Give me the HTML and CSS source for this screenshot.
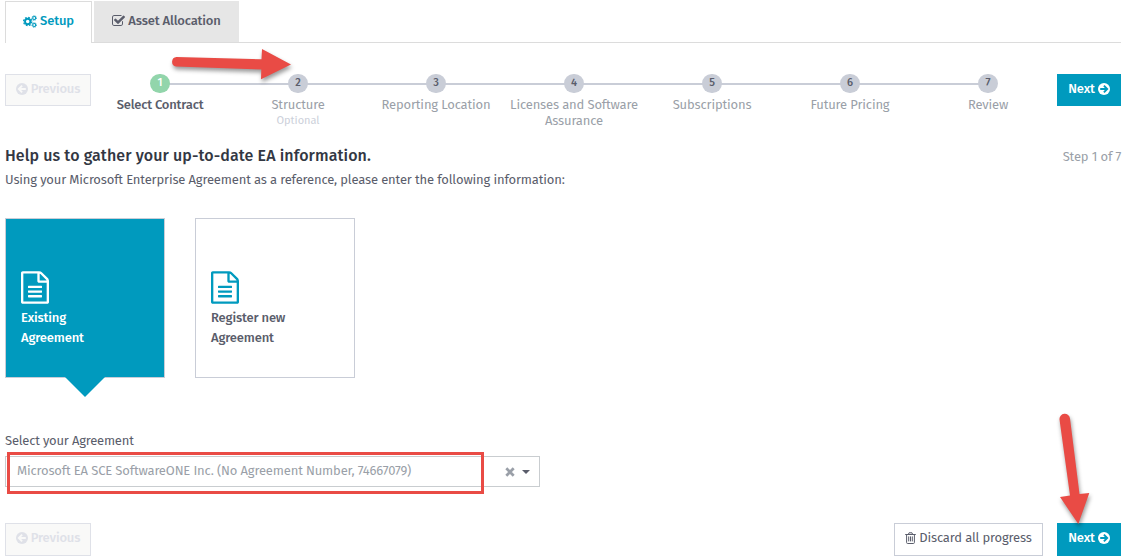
FILE: index.html
```html
<!DOCTYPE html>
<html lang="en">
<head>
<meta charset="utf-8">
<title>Agreement setup</title>
<link rel="stylesheet" href="styles.css">
</head>
<body>
<svg class="sprite" aria-hidden="true">
  <symbol id="file" viewBox="128 0 1536 1792"><path d="M1596 380q28 28 48 76t20 88v1152q0 40-28 68t-68 28H224q-40 0-68-28t-28-68V96q0-40 28-68t68-28h896q40 0 88 20t76 48zm-444-244v376h376q-10-29-22-41l-313-313q-12-12-41-22zm384 1528V640h-416q-40 0-68-28t-28-68V128H256v1536h1280zM512 832q0-14 9-23t23-9h704q14 0 23 9t9 23v64q0 14-9 23t-23 9H544q-14 0-23-9t-9-23v-64zm736 224q14 0 23 9t9 23v64q0 14-9 23t-23 9H544q-14 0-23-9t-9-23v-64q0-14 9-23t23-9h704zm0 256q14 0 23 9t9 23v64q0 14-9 23t-23 9H544q-14 0-23-9t-9-23v-64q0-14 9-23t23-9h704z"/></symbol>
  <symbol id="check" viewBox="64 128 1664 1408"><path d="M1472 930v318q0 119-84.5 203.5T1184 1536H352q-119 0-203.5-84.5T64 1248V416q0-119 84.5-203.5T352 128h832q63 0 117 25 15 7 18 23 3 17-9 29l-49 49q-10 10-23 10-3 0-9-2-23-6-45-6H352q-66 0-113 47t-47 113v832q0 66 47 113t113 47h832q66 0 113-47t47-113v-254q0-13 9-22l64-64q10-10 23-10 6 0 12 3 20 8 20 29zm231-489l-814 814q-24 24-57 24t-57-24l-430-430q-24-24-24-57t24-57l110-110q24-24 57-24t57 24l263 263 647-647q24-24 57-24t57 24l110 110q24 24 24 57t-24 57z"/></symbol>
  <symbol id="cogs" viewBox="0 0 14 13">
    <g fill="none" stroke="currentColor">
      <circle cx="4.7" cy="6.5" r="2.7" stroke-width="1.9"/>
      <circle cx="4.7" cy="6.5" r="4.1" stroke-width="1.3" stroke-dasharray="1.72 1.5"/>
      <circle cx="11.2" cy="3" r="1.5" stroke-width="1.1"/>
      <circle cx="11.2" cy="3" r="2.3" stroke-width=".9" stroke-dasharray="1 .806"/>
      <circle cx="11.2" cy="10" r="1.5" stroke-width="1.1"/>
      <circle cx="11.2" cy="10" r="2.3" stroke-width=".9" stroke-dasharray="1 .806"/>
    </g>
  </symbol>
  <symbol id="arrow" viewBox="0 0 12 12">
    <circle cx="6" cy="6" r="6"/>
    <path class="arrow-mark" d="M2.2 6h6.6M5.9 2.7 9.2 6 5.9 9.3"/>
  </symbol>
  <symbol id="trash" viewBox="0 0 11 12"><path fill="none" stroke="currentColor" d="M.2 2.5h10.6M3.4 2.4l.6-1.6h3l.6 1.6M1.6 2.6v7.9q0 1 1 1h5.8q1 0 1-1V2.6M3.7 4.4v5M5.5 4.4v5M7.3 4.4v5"/></symbol>
</svg>

<nav class="tabs">
  <a class="tab tab-active"><svg class="icon-cogs"><use href="#cogs"/></svg><span>Setup</span></a>
  <a class="tab"><svg class="icon-check"><use href="#check"/></svg><span>Asset Allocation</span></a>
</nav>

<div class="wizard">
  <button class="btn btn-disabled"><svg class="icon-arrow flip"><use href="#arrow"/></svg><span>Previous</span></button>
  <ol class="steps">
    <li class="step current"><b class="dot">1</b><span class="label">Select Contract</span></li>
    <li class="step"><b class="dot">2</b><span class="label">Structure</span><small class="optional">Optional</small></li>
    <li class="step"><b class="dot">3</b><span class="label">Reporting Location</span></li>
    <li class="step"><b class="dot">4</b><span class="label">Licenses and Software<br>Assurance</span></li>
    <li class="step"><b class="dot">5</b><span class="label">Subscriptions</span></li>
    <li class="step"><b class="dot">6</b><span class="label">Future Pricing</span></li>
    <li class="step"><b class="dot">7</b><span class="label">Review</span></li>
  </ol>
  <button class="btn btn-primary"><span>Next</span><svg class="icon-arrow"><use href="#arrow"/></svg></button>
</div>

<header class="intro">
  <h1 class="title">Help us to gather your up-to-date EA information.</h1>
  <span class="counter">Step 1 of 7</span>
</header>
<p class="lead">Using your Microsoft Enterprise Agreement as a reference, please enter the following information:</p>

<div class="cards">
  <div class="card card-selected"><svg class="icon-file"><use href="#file"/></svg><span class="card-text">Existing<br>Agreement</span></div>
  <div class="card"><svg class="icon-file"><use href="#file"/></svg><span class="card-text">Register new<br>Agreement</span></div>
</div>

<label class="field-label">Select your Agreement</label>
<div class="select">
  <span class="value">Microsoft EA SCE SoftwareONE Inc. (No Agreement Number, 74667079)</span>
  <svg class="clear" viewBox="0 0 10 10"><path d="M1.3 1.3l7.4 7.4M8.7 1.3 1.3 8.7"/></svg>
  <svg class="caret" viewBox="0 0 8 4"><path d="M0 0h8L4 4z"/></svg>
  <div class="highlight"></div>
</div>

<footer class="footer">
  <button class="btn btn-disabled"><svg class="icon-arrow flip"><use href="#arrow"/></svg><span>Previous</span></button>
  <button class="btn btn-outline"><svg class="icon-trash"><use href="#trash"/></svg><span>Discard all progress</span></button>
  <button class="btn btn-primary"><span>Next</span><svg class="icon-arrow"><use href="#arrow"/></svg></button>
</footer>

<svg class="annotations" viewBox="0 0 1127 560">
  <path d="M176.500 57 261.500 59.300 262 49 291 64.500 261 79.200 261.300 69.500 176 66.500A4.800 4.800 0 0 1 176.500 57Z"/>
  <path d="M1059.500 419.500A5.200 5.200 0 0 1 1070 418.500L1079.500 494 1089.300 493 1078.300 524 1060 497 1070 495.600Z"/>
</svg>
</body>
</html>
```
FILE: styles.css
```css
* { box-sizing: border-box; }
body {
  margin: 0;
  width: 1127px;
  height: 560px;
  padding: 1px 6px 0 5px;
  overflow: hidden;
  background: #fff;
  color: #5a5d6b;
  font: 13px/16px "Fira Sans", "Noto Sans", sans-serif;
  letter-spacing: -.155px;
  white-space: nowrap;
}
svg { display: block; flex: none; fill: currentColor; }
.sprite { position: absolute; width: 0; height: 0; }

.tabs { display: flex; gap: 2px; height: 42px; border-bottom: 1px solid #dcdcdc; }
.tab {
  display: flex; align-items: center; justify-content: center; gap: 3px;
  width: 145px; height: 41px; padding-bottom: 2px;
  background: #e6e6e6; font-weight: 500;
}
.tab-active {
  width: 87px; height: 42px; padding-bottom: 3px;
  border: 1px solid #dcdcdc; border-bottom: 0;
  background: #fff; color: #009abe;
}
.icon-cogs { width: 14px; height: 13px; }
.icon-check { width: 13px; height: 11px; }

.wizard { display: flex; align-items: flex-start; height: 54px; margin-top: 31px; }
.btn {
  display: flex; align-items: center; justify-content: center; gap: 3px;
  flex: none; height: 32px; padding: 0 0 2px; margin: 0;
  border: 1px solid #c9cdd7; border-radius: 0;
  background: #fff; color: #5a5d6b; font: inherit; letter-spacing: inherit;
}
.btn-disabled { width: 86px; border-color: #dfe1e8; background: #f9f9f8; color: #dfe1e8; font-weight: 500; }
.btn-primary { width: 64px; border-color: #009abe; background: #009abe; color: #fff; font-weight: 500; }
.btn-outline { width: 149px; }
.icon-arrow { width: 12px; height: 12px; }
.flip { transform: scaleX(-1); }
.arrow-mark { fill: none; stroke: var(--mark, #009abe); stroke-width: 1.9; }
.btn-disabled .icon-arrow { --mark: #f9f9f8; }
.icon-trash { width: 11px; height: 12px; }

.steps { display: flex; margin: 0; padding: 0; list-style: none; }
.step {
  display: flex; flex-direction: column; align-items: center;
  width: 138px; color: #9a9fa8; text-align: center;
  background: linear-gradient(#c9cdd7, #c9cdd7) 0 9px / 100% 2px no-repeat;
}
.step:first-child { background-position: 69px 9px; }
.step:last-child { background-size: 69px 2px; }
.dot {
  width: 20px; height: 19px; border-radius: 10px;
  background: #c9cdd7; color: #5a5d6b;
  font-size: 11px; line-height: 18px; font-weight: 500;
}
.current .dot { background: #92d5ab; color: #fff; }
.label { margin-top: 4px; }
.current .label { color: #5a5d6b; font-weight: 500; letter-spacing: -.2px; }
.optional { font-size: 11px; line-height: 15px; letter-spacing: 0; color: #ccd0da; }

.intro { display: flex; justify-content: space-between; align-items: center; height: 20px; margin-top: 18px; }
.title { margin: 0; font-size: 16px; line-height: 20px; font-weight: 500; letter-spacing: .09px; color: #333743; }
.counter { padding-top: 1px; color: #9a9fa8; }
.lead { margin: 6px 0 0; }

.cards { display: flex; gap: 30px; margin-top: 30px; }
.card {
  position: relative; width: 160px; height: 160px; padding: 52px 15px 0;
  border: 1px solid #c9cdd7; line-height: 20px; font-weight: 500;
}
.icon-file { width: 28px; height: 33px; margin-bottom: 4px; color: #009abe; }
.card-selected, .card-selected .icon-file { color: #fff; }
.card-selected { background: #009abe; }
.card-selected::after {
  content: ""; position: absolute; left: 59px; top: 158px;
  border: 20.5px solid transparent; border-top-color: #009abe; border-bottom: 0;
}

.field-label { display: block; margin-top: 55px; letter-spacing: -.2px; }
.select {
  position: relative; display: flex; align-items: center;
  width: 535px; height: 31px; margin-top: 7px; padding: 0 9px 0 11px;
  border: 1px solid #c9cdd0; color: #9a9fa8;
}
.value { flex: 1; padding-bottom: 2px; }
.clear { width: 10px; height: 10px; margin-right: 7px; fill: none; stroke: #9a9fa8; stroke-width: 2.7; }
.caret { width: 8px; height: 4px; color: #5a5d6b; }
.highlight { position: absolute; left: 1px; top: -5px; width: 477px; height: 42px; border: 3px solid #e94b45; }

.footer { display: flex; margin-top: 36px; }
.footer .btn { height: 33px; padding-bottom: 3px; }
.footer .btn-outline { margin: 0 14px 0 auto; }

.annotations {
  position: absolute; left: 0; top: 0; width: 1127px; height: 560px;
  fill: #e94b45; pointer-events: none;
  filter: drop-shadow(1px 3px 2px rgba(0, 0, 0, .4));
}
```
